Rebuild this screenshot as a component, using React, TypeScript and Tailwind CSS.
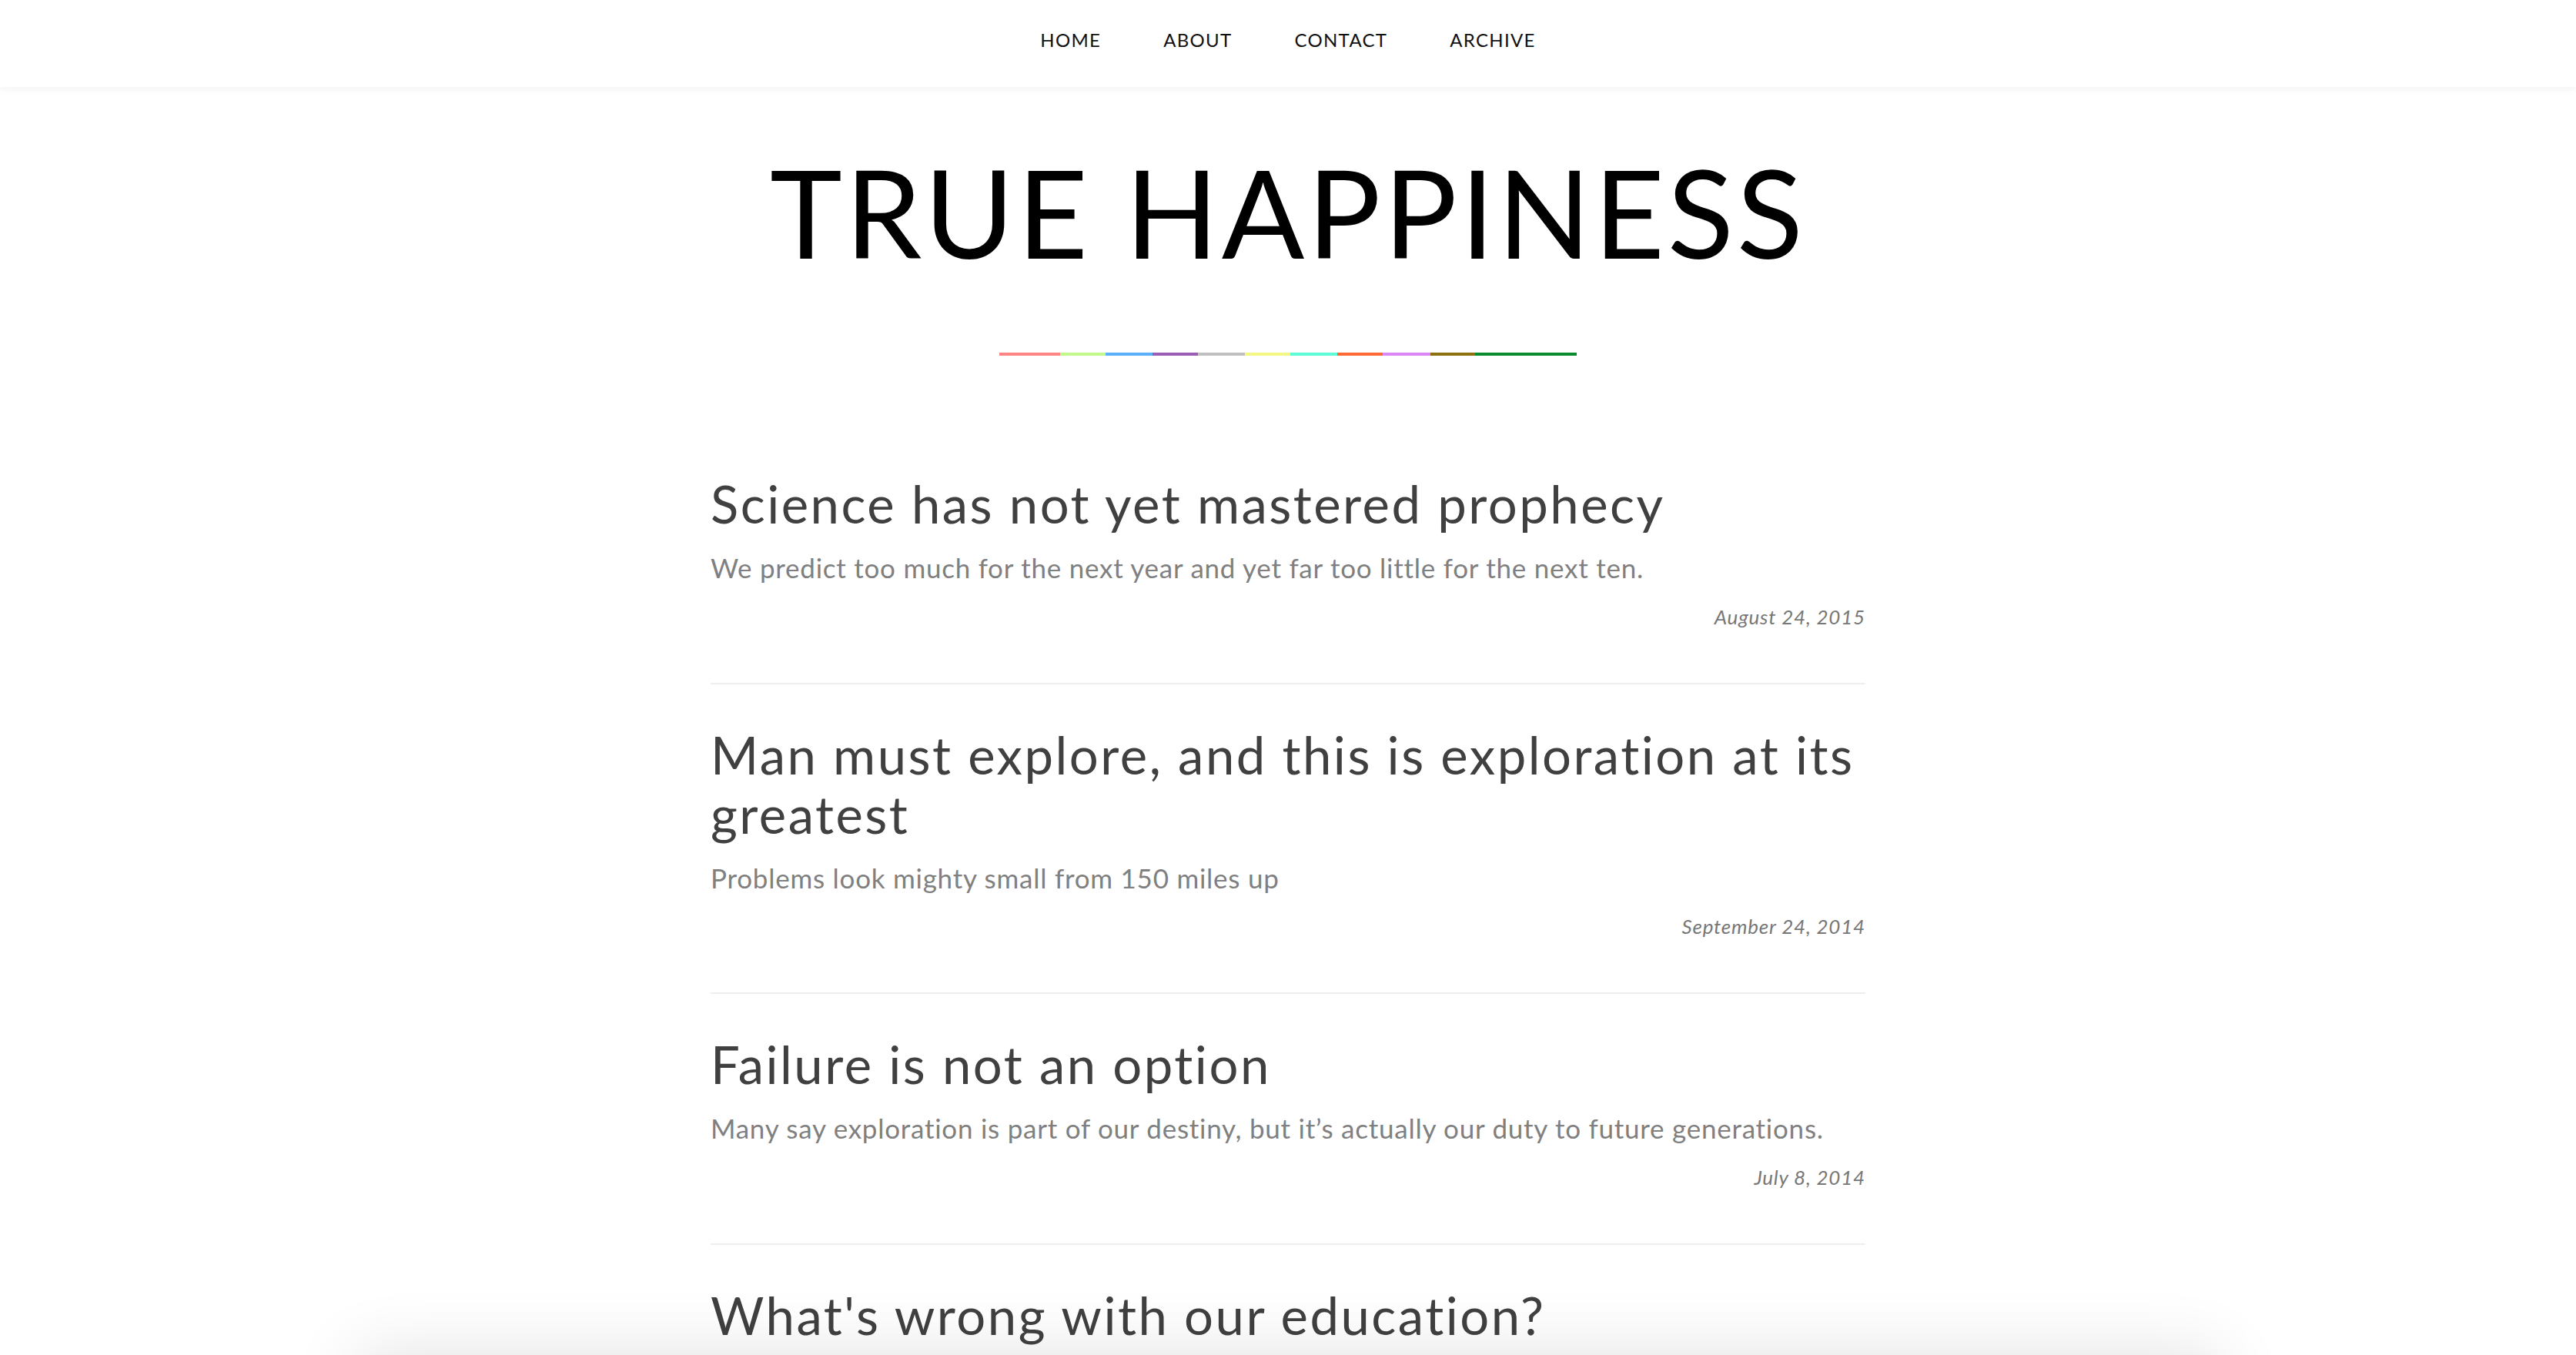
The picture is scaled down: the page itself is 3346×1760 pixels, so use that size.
import React from "react";

type Post = {
	title: string;
	subtitle: string;
	date: string;
};

const NAV = ["HOME", "ABOUT", "CONTACT", "ARCHIVE"];

// rainbow rule under the blog title, widths in px
const STRIPES: { w: string; c: string }[] = [
	{ w: "w-[79px]", c: "bg-[#fd8585]" },
	{ w: "w-[59px]", c: "bg-[#c3f98a]" },
	{ w: "w-[61px]", c: "bg-[#5cb0fb]" },
	{ w: "w-[59px]", c: "bg-[#9b5eb5]" },
	{ w: "w-[61px]", c: "bg-[#c0c0c0]" },
	{ w: "w-[59px]", c: "bg-[#f4f784]" },
	{ w: "w-[61px]", c: "bg-[#5dfcd6]" },
	{ w: "w-[59px]", c: "bg-[#fe6934]" },
	{ w: "w-[62px]", c: "bg-[#db86f5]" },
	{ w: "w-[58px]", c: "bg-[#8c710f]" },
	{ w: "w-[132px]", c: "bg-[#0a8b2e]" },
];

const POSTS: Post[] = [
	{
		title: "Science has not yet mastered prophecy",
		subtitle: "We predict too much for the next year and yet far too little for the next ten.",
		date: "August 24, 2015",
	},
	{
		title: "Man must explore, and this is exploration at its greatest",
		subtitle: "Problems look mighty small from 150 miles up",
		date: "September 24, 2014",
	},
	{
		title: "Failure is not an option",
		subtitle: "Many say exploration is part of our destiny, but it’s actually our duty to future generations.",
		date: "July 8, 2014",
	},
	{
		title: "What's wrong with our education?",
		subtitle: "Education is not the filling of a pail, but the lighting of a fire.",
		date: "June 2, 2014",
	},
];

function PostPreview({ post }: { post: Post }) {
	return (
		<article className="border-b-2 border-[#eeeeee] pt-[53px] pb-[66px]">
			<h2 className="text-[67px] leading-[77px] font-normal tracking-[2.5px] text-[#404040]">{post.title}</h2>
			<p className="mt-[18px] text-[35px] leading-[1.5] tracking-[0.75px] text-[#808080]">{post.subtitle}</p>
			<p className="mt-[18px] text-right text-[26px] leading-[1.5] italic tracking-[0.8px] text-[#777777]">
				{post.date}
			</p>
		</article>
	);
}

export default function App() {
	return (
		<div className="min-h-screen overflow-hidden bg-white font-['Lato',sans-serif]">
			<nav className="relative z-10 flex h-[113px] items-center justify-center gap-[81px] bg-white pb-[9px] shadow-[0_3px_10px_rgba(0,0,0,0.05)]">
				{NAV.map((item) => (
					<a key={item} href="#" className="text-[24px] leading-none tracking-[1.3px] text-[#111]">
						{item}
					</a>
				))}
			</nav>

			<header className="mt-[82px] flex flex-col items-center">
				<h1 className="text-[159px] leading-none font-normal tracking-[3.8px] text-black">TRUE HAPPINESS</h1>
				<div className="mt-[104px] flex h-[4px]">
					{STRIPES.map((s, i) => (
						<span key={i} className={`${s.w} ${s.c} h-full`} />
					))}
				</div>
			</header>

			<main className="mx-auto mt-[101px] w-[1500px]">
				{POSTS.map((post, index) => (
					<PostPreview key={index} post={post} />
				))}
			</main>

			<div className="fixed top-full left-1/2 h-[100px] w-[2420px] -translate-x-1/2 bg-white shadow-[0_0_90px_rgba(0,0,0,0.12)]" />
		</div>
	);
}
